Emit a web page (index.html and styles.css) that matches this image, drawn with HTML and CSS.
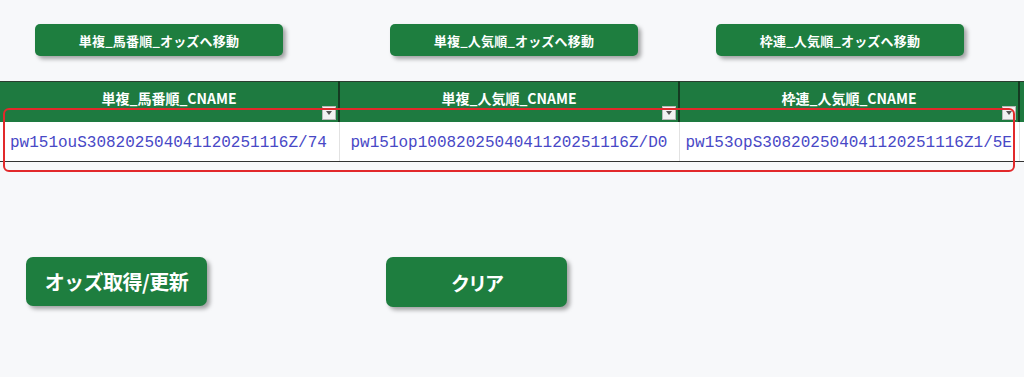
FILE: index.html
```html
<!DOCTYPE html>
<html>
  <head>
    <meta charset="utf-8">
    <title>オッズ</title>
    <link rel="stylesheet" href="styles.css">
  </head>
  <body>
    <div class="nav">
      <div class="btn btn-top nav1">単複_馬番順_オッズへ移動</div>
      <div class="btn btn-top nav2">単複_人気順_オッズへ移動</div>
      <div class="btn btn-top nav3">枠連_人気順_オッズへ移動</div>
    </div>

    <div class="sheet">
      <table>
        <tr>
          <th>単複_馬番順_CNAME<span class="filter"></span></th>
          <th>単複_人気順_CNAME<span class="filter"></span></th>
          <th>枠連_人気順_CNAME<span class="filter"></span></th>
          <th class="rest"></th>
        </tr>
        <tr>
          <td>pw151ouS308202504041120251116Z/74</td>
          <td>pw151op1008202504041120251116Z/D0</td>
          <td>pw153opS308202504041120251116Z1/5E</td>
          <td class="rest"></td>
        </tr>
      </table>
      <!-- 赤枠 -->
      <div class="mark"></div>
    </div>

    <div class="actions">
      <div class="btn btn-big act1">オッズ取得/更新</div>
      <div class="btn btn-big act2">クリア</div>
    </div>
  </body>
</html>
```

FILE: styles.css
```css
* {
    margin: 0;
    box-sizing: border-box;
}
body {
    background: #f7f8fa;
    font-family: "Noto Sans CJK JP", "Noto Sans", sans-serif;
    width: 1024px;
    height: 377px;
    overflow: hidden;
}
.btn {
    background: #1e7e3f;
    color: #fff;
    font-weight: bold;
    display: flex;
    align-items: center;
    justify-content: center;
    box-shadow: 3px 3px 4px rgba(0, 0, 0, .35);
}
.nav {
    display: flex;
    padding-top: 24px;
}
.btn-top {
    width: 248px;
    height: 32px;
    border-radius: 5px;
    font-size: 13px;
    letter-spacing: .2px;
}
.nav1 { margin-left: 35px; }
.nav2 { margin-left: 107px; }
.nav3 { margin-left: 78px; }

.sheet {
    position: relative;
    margin-top: 25px;
}
table {
    border-collapse: collapse;
    width: 1024px;
    table-layout: fixed;
}
th {
    position: relative;
    background: #1e7a40;
    color: #fff;
    font-size: 14px;
    line-height: 20px;
    font-weight: bold;
    height: 40px;
    width: 340px;
    padding: 0 0 7px;
    border-top: 1px solid #2b3d30;
    border-right: 2px solid #153a22;
}
th:first-child {
    width: 339px;
}
th.rest {
    width: 5px;
    border-right: none;
}
.filter {
    position: absolute;
    right: 2px;
    bottom: 2px;
    width: 14px;
    height: 14px;
    background: #f2f2f2;
    border: 1px solid #b8b8b8;
}
.filter::after {
    content: "";
    position: absolute;
    left: 3px;
    top: 4px;
    border-left: 3px solid transparent;
    border-right: 3px solid transparent;
    border-top: 4px solid #555;
}
td {
    background: #fff;
    height: 40px;
    padding: 3px 0 0 10px;
    font-family: "Liberation Mono", monospace;
    font-size: 16px;
    color: #4848c6;
    white-space: nowrap;
    overflow: hidden;
    border-right: 1px solid #e2e2e2;
    border-bottom: 1px solid #333;
}
td:nth-child(2) {
    padding-left: 11px;
}
td:nth-child(3) {
    padding-left: 6px;
}
td.rest {
    border-right: none;
}
.mark {
    position: absolute;
    left: 3px;
    top: 27px;
    width: 1012px;
    height: 64px;
    border: 2px solid #e2292b;
    border-radius: 6px;
}

.actions {
    display: flex;
    align-items: flex-start;
    margin-top: 95px;
}
.btn-big {
    width: 181px;
    height: 49px;
    border-radius: 7px;
    font-size: 20px;
}
.act1 { margin-left: 26px; letter-spacing: -.5px; }
.act2 { margin-left: 179px; height: 50px; font-size: 19px; letter-spacing: -2px; }
```
